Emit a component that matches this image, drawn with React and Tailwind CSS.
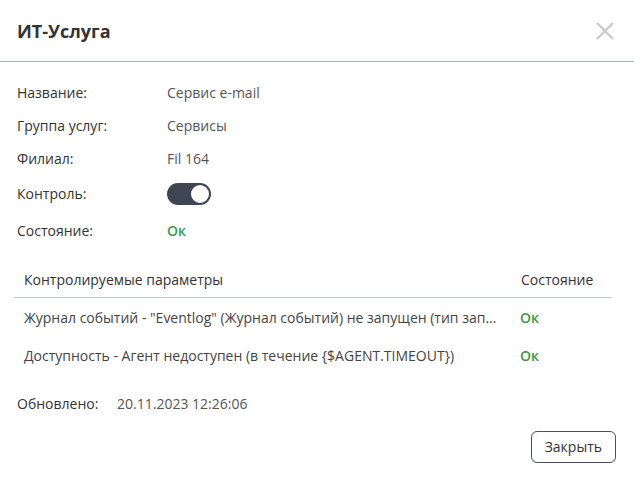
import React from "react";

const font = { fontFamily: '"Open Sans", "Noto Sans", sans-serif' };

function Row({ label, children }) {
  return (
    <div className="flex items-center h-[33px]">
      <div className="w-[150px] text-[#333]">{label}</div>
      <div className="text-[#555]">{children}</div>
    </div>
  );
}

export default function App() {
  return (
    <div className="w-[634px] h-[482px] bg-white text-sm overflow-hidden" style={font}>
      {/* Header */}
      <div className="flex items-center justify-between h-[62px] pl-[17px] pr-[20px] border-b border-[#a9b0b5]">
        <h2 className="text-lg font-bold text-[#333]">ИТ-Услуга</h2>
        <svg width="18" height="18" viewBox="0 0 18 18" className="text-[#c8c8c8]">
          <path d="M1 1 L17 17 M17 1 L1 17" stroke="currentColor" strokeWidth="2" />
        </svg>
      </div>

      {/* Body */}
      <div className="pl-[17px] pr-[18px] pt-[14px]">
        <Row label="Название:">Сервис e-mail</Row>
        <Row label="Группа услуг:">Сервисы</Row>
        <Row label="Филиал:">Fil 164</Row>
        <div className="flex items-center h-[37px]">
          <div className="w-[150px] text-[#333]">Контроль:</div>
          <div className="w-[44px] h-[22px] rounded-full bg-[#3f4653] flex items-center justify-end pr-[2px]">
            <div className="w-[18px] h-[18px] rounded-full bg-white" />
          </div>
        </div>
        <div className="flex items-center h-[37px]">
          <div className="w-[150px] text-[#333]">Состояние:</div>
          <div className="text-[#3a9a4a] font-semibold">Ок</div>
        </div>

        {/* Table */}
        <div className="mt-[13px] mr-[4px] -ml-[3px]">
          <div className="flex items-center h-[36px] border-b border-[#c8ccd0] text-[#333]">
            <div className="flex-1 min-w-0 pl-[10px]">Контролируемые параметры</div>
            <div className="w-[92px] pl-[1px]">Состояние</div>
          </div>
          <div className="flex items-center h-[39px] text-[#444]">
            <div className="flex-1 min-w-0 pl-[10px] pr-[22px] truncate">
              Журнал событий - "Eventlog" (Журнал событий) не запущен (тип запуска)
            </div>
            <div className="w-[92px] text-[#3a9a4a] font-semibold">Ок</div>
          </div>
          <div className="flex items-center h-[38px] text-[#444]">
            <div className="flex-1 min-w-0 pl-[10px] pr-[22px] truncate">
              Доступность - Агент недоступен (в течение {"{$AGENT.TIMEOUT}"})
            </div>
            <div className="w-[92px] text-[#3a9a4a] font-semibold">Ок</div>
          </div>
        </div>

        <div className="flex items-center mt-[17px] h-[24px]">
          <div className="w-[100px] text-[#333]">Обновлено:</div>
          <div className="text-[#555]">20.11.2023 12:26:06</div>
        </div>

        <div className="flex justify-end mt-[15px]">
          <button className="h-[32px] px-[13px] rounded-md border border-[#4a5060] text-[#333] bg-white">
            Закрыть
          </button>
        </div>
      </div>
    </div>
  );
}
